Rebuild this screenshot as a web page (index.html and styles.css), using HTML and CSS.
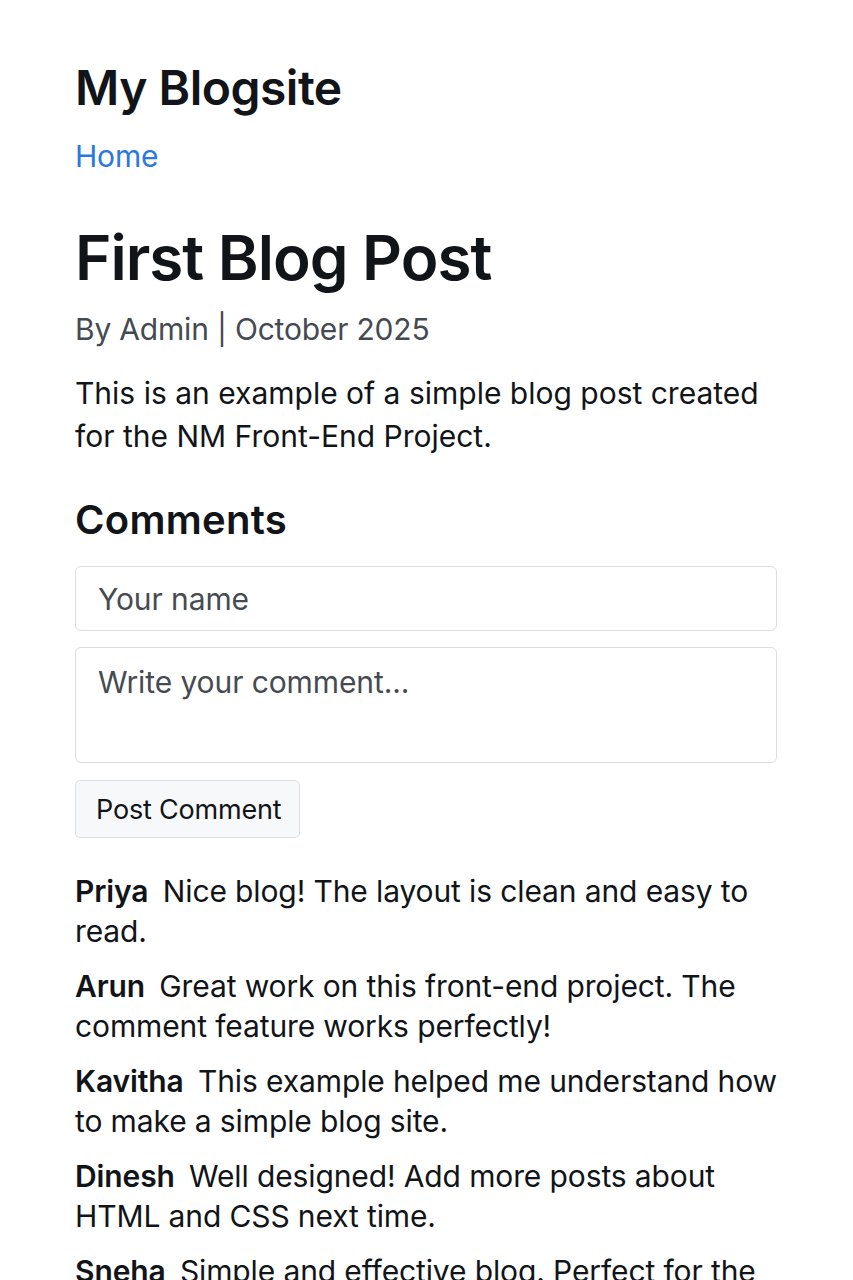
FILE: index.html
```html
<!DOCTYPE html>
<html lang="en">
<head>
<meta charset="utf-8">
<title>My Blogsite</title>
<link rel="stylesheet" href="styles.css">
</head>
<body>
<div class="page">
  <header class="site-header">
    <h1 class="site-title">My Blogsite</h1>
    <nav class="nav"><a href="#" class="nav-link">Home</a></nav>
  </header>
  <article class="post">
    <h2 class="post-title">First Blog Post</h2>
    <p class="post-meta">By Admin | October 2025</p>
    <p class="post-body">This is an example of a simple blog post created for the NM Front-End Project.</p>
  </article>
  <section class="comments">
    <h3 class="comments-title">Comments</h3>
    <form class="comment-form">
      <input class="field field-name" type="text" placeholder="Your name">
      <textarea class="field field-text" placeholder="Write your comment..."></textarea>
      <div><button class="btn" type="button">Post Comment</button></div>
    </form>
    <div class="comment-list">
      <p class="comment"><strong class="author">Priya</strong> Nice blog! The layout is clean and easy to read.</p>
      <p class="comment"><strong class="author">Arun</strong> Great work on this front-end project. The comment feature works perfectly!</p>
      <p class="comment"><strong class="author">Kavitha</strong> This example helped me understand how to make a simple blog site.</p>
      <p class="comment"><strong class="author">Dinesh</strong> Well designed! Add more posts about HTML and CSS next time.</p>
      <p class="comment"><strong class="author">Sneha</strong> Simple and effective blog. Perfect for the beginners learning front-end development.</p>
    </div>
  </section>
</div>
</body>
</html>
```

FILE: styles.css
```css
* { box-sizing: border-box; }
html, body { margin: 0; padding: 0; background: #fff; }
body {
  font-family: Inter, "Noto Sans", "Liberation Sans", sans-serif;
  color: #111418;
}
.page {
  padding: 58px 76px 0 75px;
}
.site-title {
  margin: 0;
  font-size: 48px;
  line-height: 60px;
  font-weight: 600;
  letter-spacing: -0.5px;
}
.nav { margin-top: 18px; }
.nav-link {
  color: #2a78e0;
  text-decoration: none;
  font-size: 30px;
  line-height: 40px;
  letter-spacing: -0.2px;
}
.post { margin-top: 45px; }
.post-title {
  margin: 0;
  font-size: 62px;
  line-height: 74px;
  font-weight: 600;
  letter-spacing: -1px;
}
.post-meta {
  margin: 14px 0 0;
  color: #454a52;
  font-size: 30px;
  line-height: 40px;
  letter-spacing: -0.2px;
}
.post-body {
  margin: 23px 0 0;
  font-size: 30px;
  line-height: 43px;
  letter-spacing: 0;
}
.comments { margin-top: 37px; }
.comments-title {
  margin: 0;
  font-size: 40px;
  line-height: 50px;
  font-weight: 600;
  letter-spacing: 0.3px;
}
.comment-form {
  margin-top: 21px;
  display: flex;
  flex-direction: column;
  gap: 16px;
}
.field {
  display: block;
  width: 100%;
  border: 1px solid #dadee1;
  border-radius: 6px;
  font-family: inherit;
  font-size: 30px;
  letter-spacing: -0.1px;
  color: #111418;
  padding: 0 22px;
  background: #fff;
  margin: 0;
}
.field::placeholder { color: #464b52; opacity: 1; }
.field-name { height: 65px; }
.field-text { height: 116px; padding-top: 16px; resize: none; line-height: 36px; }
.btn {
  margin-top: 1px;
  height: 58px;
  padding: 0 18px 0 20px;
  border: 1px solid #dcdfe2;
  border-radius: 5px;
  background: #f7f8fa;
  font-family: inherit;
  font-size: 27px;
  letter-spacing: -0.2px;
  color: #111418;
}
.comment-list {
  margin-top: 33px;
  display: flex;
  flex-direction: column;
  gap: 15px;
}
.comment {
  margin: 0;
  font-size: 30px;
  line-height: 40px;
  letter-spacing: -0.12px;
}
.author { font-weight: 600; margin-right: 6px; }
```
